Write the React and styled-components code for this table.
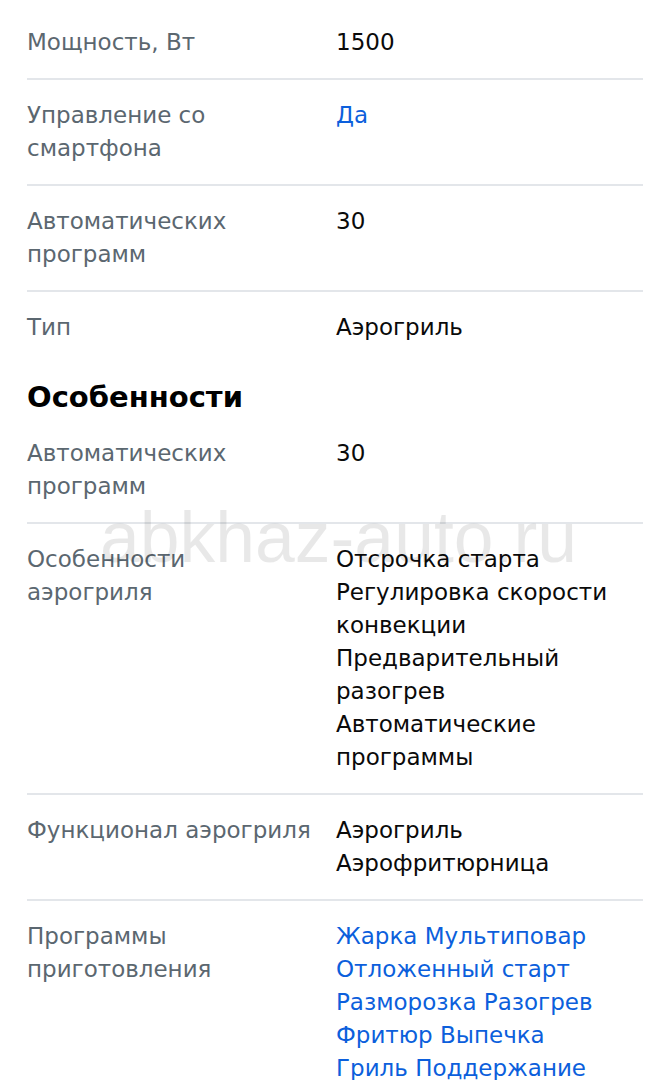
import styled, { createGlobalStyle } from "styled-components";

const GlobalStyle = createGlobalStyle`
  body {
    margin: 0;
    background: #fff;
    font-family: "DejaVu Sans", "Noto Sans", sans-serif;
  }
`;

const StyledPage = styled.div`
  position: relative;
  padding: 7px 27px 0;
  overflow: hidden;
  height: 1080px;
  box-sizing: border-box;
`;

const StyledWatermark = styled.div`
  position: absolute;
  top: 496px;
  left: 100px;
  font-family: "Liberation Sans", Arial, sans-serif;
  font-size: 71.5px;
  color: rgba(0, 0, 0, 0.09);
  pointer-events: none;
  white-space: nowrap;
  z-index: 1;
`;

const StyledRow = styled.div`
  display: grid;
  grid-template-columns: 309px 1fr;
  padding: 19px 0;
  border-bottom: ${(p) => (p.$last ? "none" : "2px solid #e3e6ea")};
  font-size: 23px;
  line-height: 33px;
`;

const StyledLabel = styled.div`
  color: #5b6770;
  padding-right: 4px;
  white-space: nowrap;
`;

const StyledValue = styled.div`
  color: ${(p) => (p.$link ? "#0c5fdc" : "#0a0a0a")};
`;

const StyledHeading = styled.h2`
  margin: 16px 0 3px;
  font-size: 29px;
  line-height: 36px;
  font-weight: 700;
  color: #000;
`;

const Row = ({ label, value, link, last }) => (
  <StyledRow $last={last}>
    <StyledLabel>{label}</StyledLabel>
    <StyledValue $link={link}>
      {[].concat(value).map((v) => (
        <div key={v}>{v}</div>
      ))}
    </StyledValue>
  </StyledRow>
);

const App = () => {
  return (
    <>
      <GlobalStyle />
      <StyledPage>
        <Row label="Мощность, Вт" value="1500" />
        <Row label={<>Управление со<br />смартфона</>} value="Да" link />
        <Row label={<>Автоматических<br />программ</>} value="30" />
        <Row label="Тип" value="Аэрогриль" last />

        <StyledHeading>Особенности</StyledHeading>
        <Row label={<>Автоматических<br />программ</>} value="30" />
        <Row
          label={<>Особенности<br />аэрогриля</>}
          value={[
            "Отсрочка старта",
            "Регулировка скорости",
            "конвекции",
            "Предварительный",
            "разогрев",
            "Автоматические",
            "программы",
          ]}
        />
        <Row
          label="Функционал аэрогриля"
          value={["Аэрогриль", "Аэрофритюрница"]}
        />
        <Row
          label={<>Программы<br />приготовления</>}
          link
          last
          value={[
            "Жарка Мультиповар",
            "Отложенный старт",
            "Разморозка Разогрев",
            "Фритюр Выпечка",
            "Гриль Поддержание",
          ]}
        />
        <StyledWatermark>abkhaz-auto.ru</StyledWatermark>
      </StyledPage>
    </>
  );
};

export default App;
